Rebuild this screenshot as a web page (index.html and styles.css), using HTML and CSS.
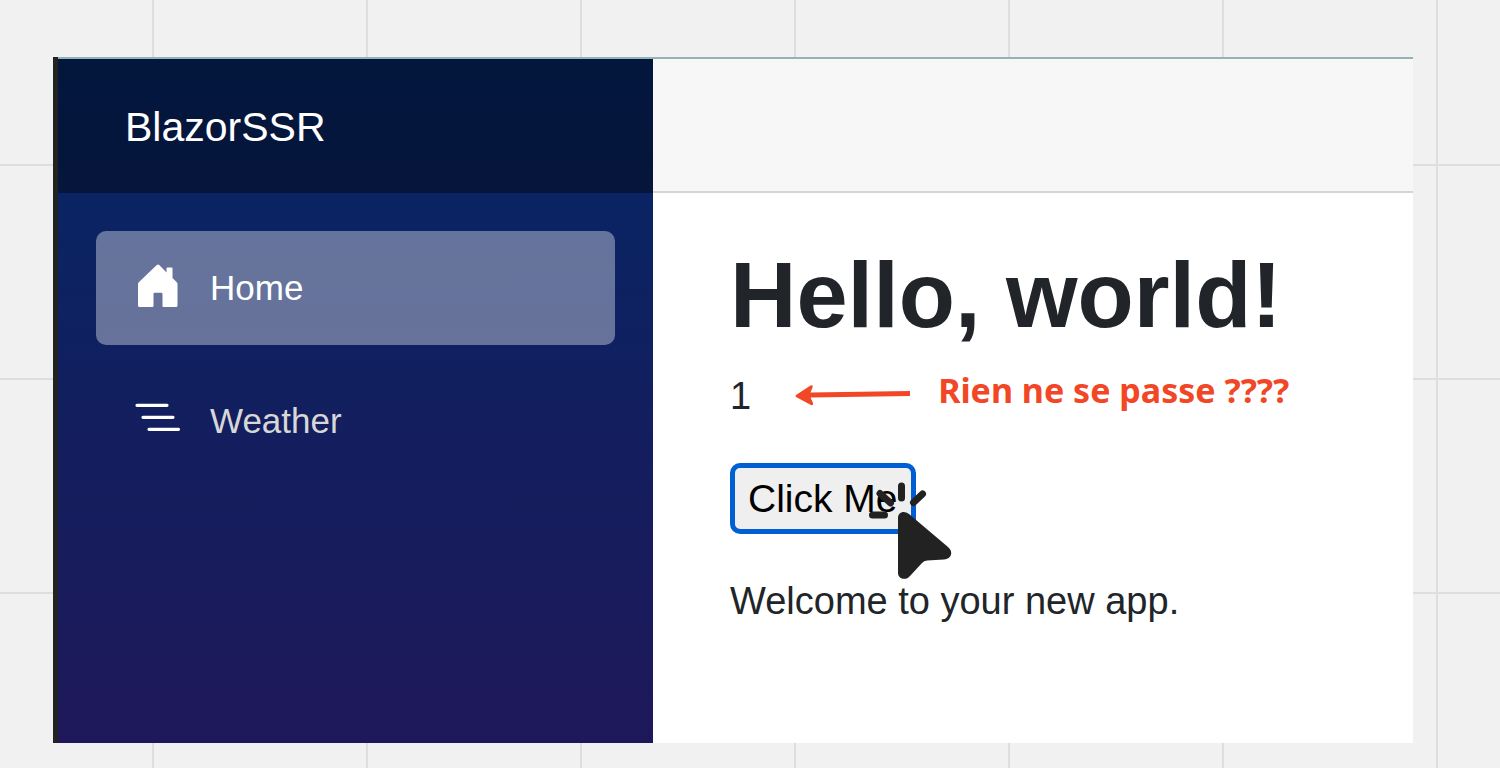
FILE: index.html
```html
<!DOCTYPE html>
<html lang="en">
<head>
<meta charset="utf-8">
<title>BlazorSSR</title>
<link rel="stylesheet" href="styles.css">
</head>
<body>
<div class="window">
  <aside class="sidebar">
    <header class="brand-bar"><a class="brand" href="#">BlazorSSR</a></header>
    <nav class="nav">
      <a class="nav-link active" href="#">
        <svg class="nav-icon" viewBox="0 0 48 48" aria-hidden="true"><path fill="#fff" d="M22.500 1.200Q24 0 25.500 1.200L32.500 8.500V4.500Q32.500 3.500 33.500 3.500H37.500Q38.500 3.500 38.500 4.500V14L42.500 18Q43.500 19 43.500 20V41.500Q43.500 43 42 43H29.500Q28.500 43 28.500 42V30Q28.500 28.800 27.500 28.800H20.500Q19.500 28.800 19.500 30V42Q19.500 43 18.500 43H5.500Q4 43 4 41.500V20Q4 19 5 18Z"/></svg>
        <span>Home</span>
      </a>
      <a class="nav-link" href="#">
        <svg class="nav-icon" viewBox="0 0 48 48" aria-hidden="true"><path stroke="#fff" stroke-width="3.200" stroke-linecap="round" d="M3 8.300H33M9 20.300H39M15 32.300H44.500"/></svg>
        <span>Weather</span>
      </a>
    </nav>
  </aside>
  <main class="main">
    <div class="top-row"></div>
    <article class="content">
      <h1 class="title">Hello, world!</h1>
      <div class="count-row">
        <span class="count">1</span>
        <svg class="arrow" viewBox="0 0 116 24" aria-hidden="true"><path fill="#f24726" d="M1 11L15.500 1.500Q18.500 0.500 17.500 3.500L15.500 8.500L115 7V12L15.500 13.500L18 19Q18.500 22 16 21L1 13Q0 12 1 11Z"/></svg>
        <strong class="note">Rien ne se passe ????</strong>
      </div>
      <div class="action">
        <button class="button" type="button">Click Me</button>
        <svg class="pointer" viewBox="0 0 84 102" aria-hidden="true">
          <path stroke="#222" stroke-width="7" stroke-linecap="round" d="M33.500 6V18M12 13.500L22.500 23M54.500 14L45.500 22.500M4.500 35H16.500"/>
          <path fill="#222" d="M30 38C30 32 36 30 41 34L80 67C86 72 83 79 76 79.500L59 80.500Q56 80.500 54 83L42 96C38 101 30 99 30 93Z"/>
        </svg>
      </div>
      <p class="welcome">Welcome to your new app.</p>
    </article>
  </main>
</div>
</body>
</html>
```
FILE: styles.css
```css
* { box-sizing: border-box; }
body {
  margin: 0;
  min-height: 100vh;
  padding: 57px 87px 25px 53px;
  display: flex;
  font-family: "Liberation Sans", Arial, sans-serif;
  color: #212529;
  background-color: #f1f1f1;
  background-image:
    linear-gradient(#dedede 2px, transparent 2px),
    linear-gradient(90deg, #dedede 2px, transparent 2px);
  background-size: 214px 214px;
  background-position: -62px -50px;
}
.window {
  flex: 1;
  display: flex;
  background: #fff;
  border-left: 5px solid #222;
}
.sidebar {
  flex: 0 0 595px;
  border-top: 2px solid #93b3b5;
  background: linear-gradient(#052767, #0a2463 20%, #121f5f 50%, #1e185a);
}
.brand-bar {
  height: 134px;
  padding: 2px 67px 0;
  display: flex;
  align-items: center;
  background: rgba(0, 0, 0, 0.4);
}
.brand {
  font-size: 41px;
  line-height: 58px;
  color: #fff;
  text-decoration: none;
}
.nav {
  display: flex;
  flex-direction: column;
  gap: 19px;
  padding: 38px;
}
.nav-link {
  height: 114px;
  padding: 0 38px;
  display: flex;
  align-items: center;
  gap: 28px;
  border-radius: 10px;
  font-size: 35px;
  color: #d7d7d7;
  text-decoration: none;
}
.nav-link.active {
  color: #fff;
  background: rgba(255, 255, 255, 0.37);
}
.nav-icon {
  width: 48px;
  height: 48px;
  fill: none;
}
.main { flex: 1; border-top: 2px solid #93b3b5; }
.top-row {
  height: 134px;
  background: #f7f7f7;
  border-bottom: 2px solid #d6d5d5;
}
.content { padding: 47px 77px; }
.title {
  margin: 0 0 17px;
  font-size: 92px;
  line-height: 110px;
}
.count-row {
  display: flex;
  align-items: center;
  margin-bottom: 38px;
  font-size: 38px;
  line-height: 58px;
}
.arrow {
  width: 116px;
  height: 24px;
  margin: 0 27px 0 44px;
}
.note {
  font-family: "Noto Sans", "Open Sans", sans-serif;
  font-size: 34px;
  line-height: 46px;
  padding-bottom: 12px;
  color: #f24726;
}
.action {
  position: relative;
  width: max-content;
  margin-bottom: 38px;
}
.button {
  display: block;
  height: 71px;
  padding: 0 13px;
  border: 5px solid #0060d3;
  border-radius: 10px;
  background: #efefef;
  color: #000;
  font: 39px "Liberation Sans", Arial, sans-serif;
}
.pointer {
  position: absolute;
  left: 138px;
  top: 17px;
  width: 84px;
  height: 102px;
  fill: none;
}
.welcome {
  margin: 0;
  font-size: 38px;
  line-height: 58px;
}
```
